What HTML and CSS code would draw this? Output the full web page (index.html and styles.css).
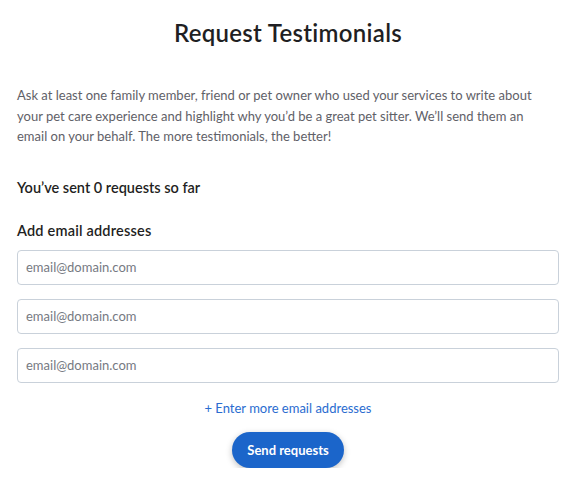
FILE: index.html
```html
<!DOCTYPE html>
<html lang="en">
<head>
<meta charset="utf-8">
<link rel="stylesheet" href="styles.css">
</head>
<body>
<main class="page">
  <h1 class="title">Request Testimonials</h1>
  <p class="intro">Ask at least one family member, friend or pet owner who used your services to write about<br>your pet care experience and highlight why you’d be a great pet sitter. We’ll send them an<br>email on your behalf. The more testimonials, the better!</p>
  <h2 class="count">You’ve sent 0 requests so far</h2>
  <h2 class="label">Add email addresses</h2>
  <div class="inputs">
    <input class="email" type="email" placeholder="email@domain.com">
    <input class="email" type="email" placeholder="email@domain.com">
    <input class="email" type="email" placeholder="email@domain.com">
  </div>
  <a class="more" href="#">+ Enter more email addresses</a>
  <button class="send" type="button">Send requests</button>
</main>
</body>
</html>
```
FILE: styles.css
```css
* { box-sizing: border-box; }
body {
  margin: 0;
  background: #fff;
  font-family: Lato, "Noto Sans", sans-serif;
  color: #1f1f23;
}
.page {
  width: 542px;
  margin-left: 17px;
  padding-top: 17px;
  display: flex;
  flex-direction: column;
}
.title {
  margin: 0;
  text-align: center;
  font-size: 24px;
  font-weight: 600;
  line-height: 32px;
  letter-spacing: 0.3px;
}
.intro {
  margin: 36px 0 0;
  font-size: 13px;
  line-height: 20.5px;
  color: #5f6168;
}
.count {
  margin: 31px 0 0;
  font-size: 14.5px;
  font-weight: 600;
  line-height: 20px;
}
.label {
  margin: 23px 0 0;
  font-size: 14.5px;
  font-weight: 600;
  line-height: 20px;
  letter-spacing: 0.2px;
}
.inputs {
  margin-top: 9px;
  display: flex;
  flex-direction: column;
  gap: 14px;
}
.email {
  height: 35px;
  width: 100%;
  border: 1px solid #c9d1da;
  border-radius: 4px;
  padding: 0 8px;
  font-family: inherit;
  font-size: 13px;
  color: #1f1f23;
}
.email::placeholder { color: #767a82; }
.more {
  margin-top: 16px;
  align-self: center;
  font-size: 13px;
  line-height: 18px;
  color: #2a6cd0;
  text-decoration: none;
}
.send {
  margin-top: 15px;
  align-self: center;
  width: 112px;
  height: 36px;
  border: none;
  border-radius: 18px;
  background: #1b65ca;
  color: #fff;
  font-family: inherit;
  font-size: 13px;
  font-weight: 700;
  box-shadow: 0 2px 6px rgba(0,0,0,0.25);
}
```
